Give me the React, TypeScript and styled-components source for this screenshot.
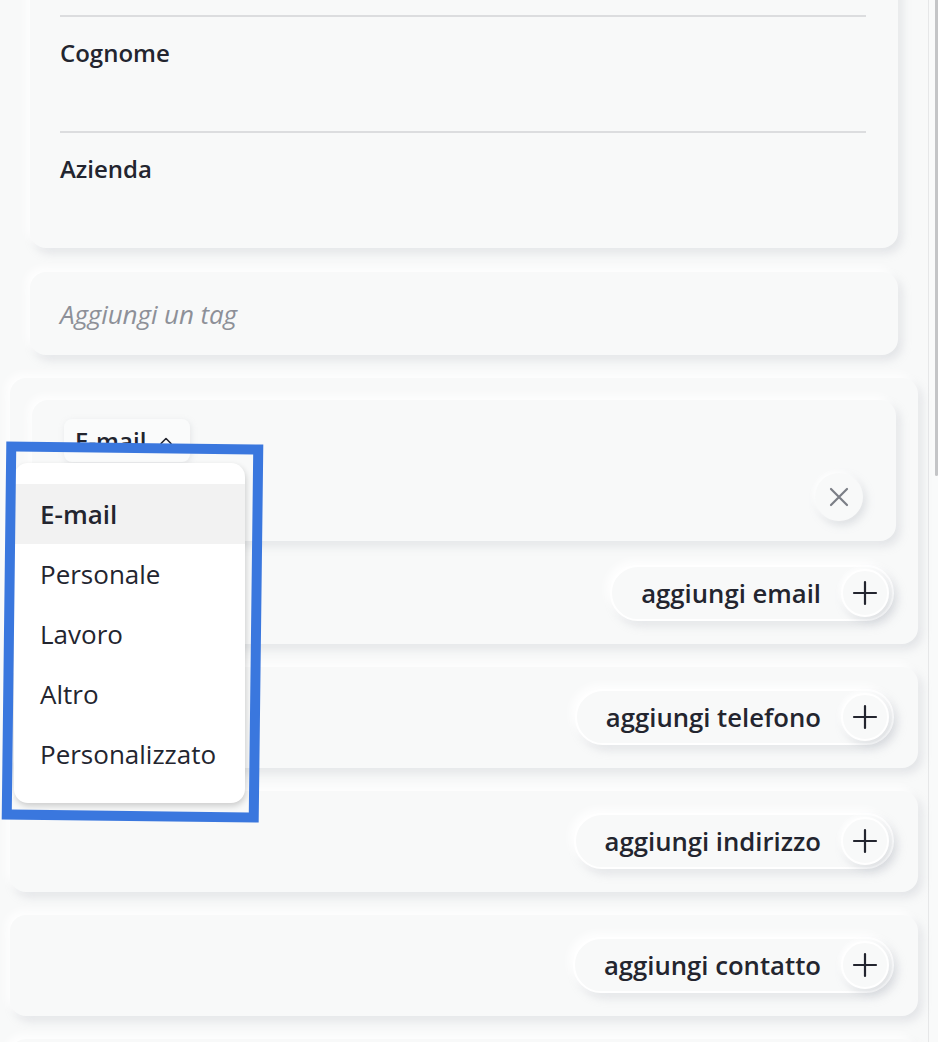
import styled, {createGlobalStyle} from "styled-components";

const GlobalStyle = createGlobalStyle`
  html, body {
    margin: 0;
    padding: 0;
    background: #f8f9f9;
    overflow: hidden;
  }
  body {
    font-family: "Open Sans", "Noto Sans", sans-serif;
    color: #23252f;
  }
`

const raised = `
  box-shadow: -4px -4px 8px rgba(255, 255, 255, 0.95), 4px 5px 10px rgba(170, 174, 184, 0.28);
`

const Page = styled.div`
  display: flex;
  height: 1042px;
  overflow: hidden;
`

const Column = styled.main`
  flex: 1;
  padding: 0 10px;
  display: flex;
  flex-direction: column;
  gap: 23px;

  & > * {
    flex-shrink: 0;
  }
`

const ScrollTrack = styled.div`
  width: 9px;
  border-left: 1px solid #e6e7e8;
  background: #f9fafa;
  display: flex;
  justify-content: flex-end;
`

const ScrollThumb = styled.div`
  width: 3px;
  height: 476px;
  background: #c4c5c7;
  border-radius: 0 0 3px 3px;
`

const Card = styled.section<{ $inset?: boolean }>`
  background: #f8f9f9;
  border-radius: 16px;
  margin: 0 ${p => (p.$inset ? "20px" : "0")};
  ${raised}
`

const NameCard = styled(Card)`
  margin-top: -101px;
  padding: 0 32px 0 30px;
`

const Field = styled.div<{ $first?: boolean; $last?: boolean }>`
  height: ${p => (p.$last ? "117px" : "116px")};
  box-sizing: border-box;
  border-top: ${p => (p.$first ? "none" : "2px solid #dcdddf")};
  padding-top: 24px;
`

const Label = styled.div`
  font-size: 24px;
  font-weight: 600;
  line-height: 24px;
`

const TagCard = styled(Card)`
  height: 83px;
  box-sizing: border-box;
  display: flex;
  align-items: center;
  padding: 0 30px;
  margin-top: 1px;
`

const Placeholder = styled.span`
  font-size: 26px;
  font-style: italic;
  color: #8d9098;
  letter-spacing: -0.1px;
`

const Group = styled(Card)<{ $empty?: boolean }>`
  position: relative;
  padding: 22px 22px 23px 22px;
  height: ${p => (p.$empty ? "100px" : "auto")};
  display: flex;
  flex-direction: column;
  align-items: flex-end;
`

const EntryCard = styled.div`
  align-self: stretch;
  background: #f8f9f9;
  border-radius: 16px;
  padding: 19px 33px 20px 32px;
  margin-bottom: 24px;
  ${raised}
`

const TypeChip = styled.div`
  display: inline-flex;
  align-items: center;
  gap: 12px;
  height: 43px;
  padding: 0 16px 0 11px;
  box-sizing: border-box;
  border-radius: 8px;
  background: #fafbfb;
  font-size: 24px;
  font-weight: 600;
  box-shadow: 1px 2px 6px rgba(170, 174, 184, 0.25);
`

const EntryRow = styled.div`
  display: flex;
  justify-content: flex-end;
  margin-top: 11px;
`

const RoundButton = styled.button<{ $rim?: boolean }>`
  width: 48px;
  height: 48px;
  border-radius: 50%;
  border: ${p => (p.$rim ? "2px solid #ffffff" : "none")};
  box-sizing: border-box;
  background: #f8f9f9;
  display: flex;
  align-items: center;
  justify-content: center;
  padding: 0;
  box-shadow: -2px -2px 5px rgba(255, 255, 255, 0.9), 3px 4px 8px rgba(170, 174, 184, 0.35);
`

const AddPill = styled.button`
  display: flex;
  align-items: center;
  gap: 20px;
  height: 56px;
  margin-right: 2px;
  box-sizing: border-box;
  border-radius: 28px;
  border: 2px solid #ffffff;
  background: #f8f9f9;
  padding: 0 3px 0 29px;
  font-family: "Open Sans", "Noto Sans", sans-serif;
  font-size: 25.7px;
  font-weight: 600;
  color: #23252f;
  ${raised}
`

const Menu = styled.ul`
  position: absolute;
  left: 4px;
  top: 85px;
  width: 231px;
  margin: 0;
  padding: 21px 0 19px;
  list-style: none;
  background: #ffffff;
  border-radius: 14px;
  box-shadow: 1px 3px 6px rgba(0, 0, 0, 0.18);
  z-index: 2;
`

const MenuItem = styled.li<{ $active?: boolean }>`
  height: 60px;
  display: flex;
  align-items: center;
  padding-left: 26px;
  font-size: 26px;
  font-weight: ${p => (p.$active ? 600 : 400)};
  background: ${p => (p.$active ? "#f2f2f2" : "transparent")};
`

const Highlight = styled.div`
  position: absolute;
  left: -6px;
  top: 65px;
  width: 237px;
  height: 358px;
  border: 10px solid #3a77de;
  transform: rotate(0.7deg);
  z-index: 3;
  pointer-events: none;
`

const ChevronUp = () => (
  <svg width="16" height="16" viewBox="0 0 16 16" fill="none" stroke="#23252f" strokeWidth="1.6" strokeLinecap="round" strokeLinejoin="round">
    <path d="M3 10.5 8 5.5l5 5"/>
  </svg>
)

const CloseIcon = () => (
  <svg width="22" height="22" viewBox="0 0 22 22" fill="none" stroke="#7b7e86" strokeWidth="2.2" strokeLinecap="round">
    <path d="M3 3l16 16M19 3 3 19"/>
  </svg>
)

const PlusIcon = () => (
  <svg width="26" height="26" viewBox="0 0 26 26" fill="none" stroke="#23252f" strokeWidth="2.2" strokeLinecap="round">
    <path d="M13 2v22M2 13h22"/>
  </svg>
)

const menuOptions = ["E-mail", "Personale", "Lavoro", "Altro", "Personalizzato"];

function AddButton({label}: { label: string }) {
    return (
        <AddPill>
            {label}
            <RoundButton as="span" $rim>
                <PlusIcon/>
            </RoundButton>
        </AddPill>
    )
}

export default function App() {
    return (
        <>
            <GlobalStyle/>
            <Page>
                <Column>
                    <NameCard $inset>
                        <Field $first/>
                        <Field><Label>Cognome</Label></Field>
                        <Field $last><Label>Azienda</Label></Field>
                    </NameCard>

                    <TagCard $inset>
                        <Placeholder>Aggiungi un tag</Placeholder>
                    </TagCard>

                    <Group>
                        <EntryCard>
                            <TypeChip>E-mail <ChevronUp/></TypeChip>
                            <EntryRow>
                                <RoundButton>
                                    <CloseIcon/>
                                </RoundButton>
                            </EntryRow>
                        </EntryCard>
                        <AddButton label="aggiungi email"/>

                        <Menu>
                            {menuOptions.map((option, i) => (
                                <MenuItem key={option} $active={i === 0}>{option}</MenuItem>
                            ))}
                        </Menu>
                        <Highlight/>
                    </Group>

                    <Group>
                        <AddButton label="aggiungi telefono"/>
                    </Group>
                    <Group>
                        <AddButton label="aggiungi indirizzo"/>
                    </Group>
                    <Group>
                        <AddButton label="aggiungi contatto"/>
                    </Group>
                    <Group $empty/>
                </Column>
                <ScrollTrack>
                    <ScrollThumb/>
                </ScrollTrack>
            </Page>
        </>
    )
}
